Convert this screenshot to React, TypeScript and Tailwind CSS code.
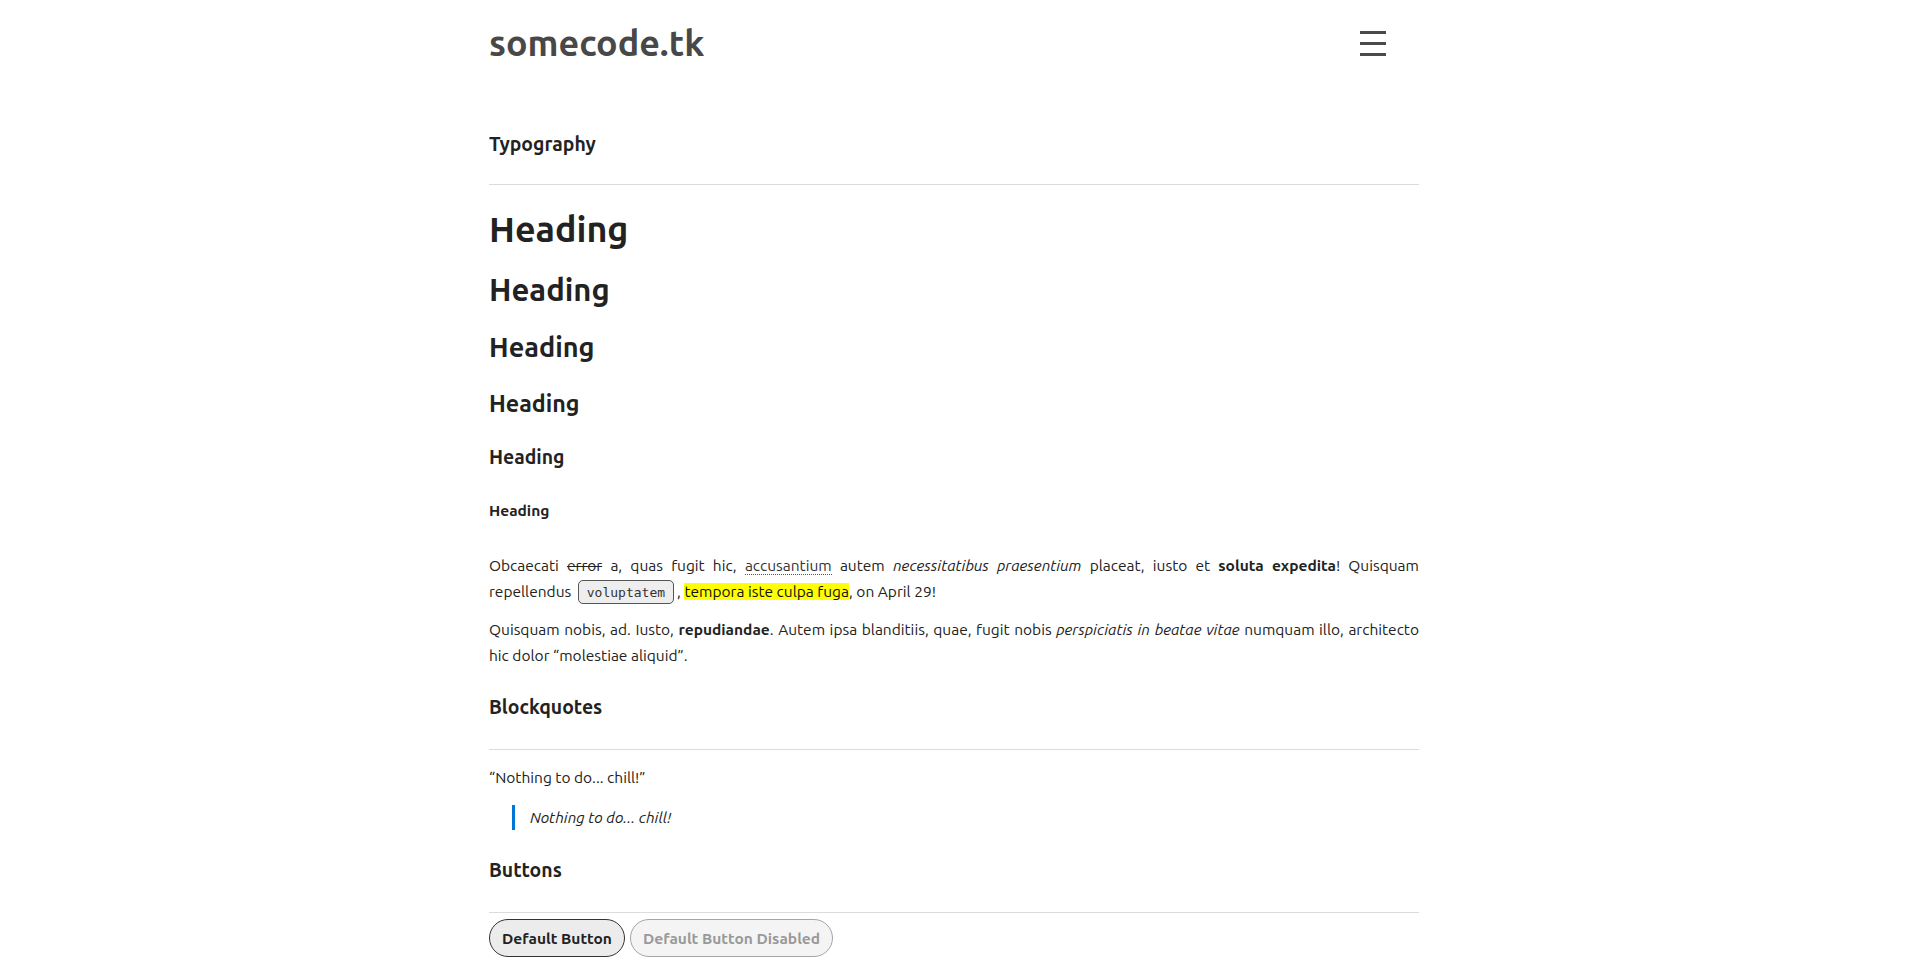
import React from "react";

function SectionTitle({ children, cls }: { children: React.ReactNode; cls: string }) {
  return (
    <h2 className={`${cls} border-b border-[#dcdcdc] text-[19.4px] font-bold leading-[23px] text-[#222]`}>
      {children}
    </h2>
  );
}

export default function App() {
  return (
    <div className="min-h-screen bg-white font-['Ubuntu','Noto_Sans',sans-serif] text-[15.5px] text-[#222]">
      <div className="mx-auto w-[930px]">
        <header className="flex items-center justify-between pt-[26px]">
          <div className="text-[35.9px] font-bold leading-none text-[#484848]">somecode.tk</div>
          <svg width="26" height="26" viewBox="0 0 26 26" className="mr-[33px]" aria-label="menu">
            <rect x="0" y="0" width="26" height="3" fill="#4a4a4a" />
            <rect x="0" y="11" width="26" height="3" fill="#4a4a4a" />
            <rect x="0" y="22" width="26" height="3" fill="#4a4a4a" />
          </svg>
        </header>

        <main>
          <SectionTitle cls="mt-[71px] pb-[28px]">Typography</SectionTitle>

          <h1 className="mt-[23px] text-[35.8px] font-bold leading-[1.2]">Heading</h1>
          <h2 className="mt-[20px] text-[31px] font-bold leading-[1.2]">Heading</h2>
          <h3 className="mt-[23px] text-[27.1px] font-bold leading-[1.2]">Heading</h3>
          <h4 className="mt-[26px] text-[23.25px] font-bold leading-[1.2]">Heading</h4>
          <h5 className="mt-[29px] text-[19.4px] font-bold leading-[1.2]">Heading</h5>
          <h6 className="mt-[32px] text-[15.5px] font-bold leading-[1.2]">Heading</h6>

          <p className="mt-[33px] text-justify leading-[25.5px]">
            Obcaecati <del>error</del> a, quas fugit hic,{" "}
            <a href="#" className="border-b border-dotted border-[#555] text-[#333]">accusantium</a> autem{" "}
            <i>necessitatibus praesentium</i> placeat, iusto et <b>soluta expedita</b>! Quisquam repellendus{" "}
            <code className="mx-[3px] rounded-[5px] border border-[#555] bg-[#eee] px-[8px] py-[3.5px] font-['DejaVu_Sans_Mono',monospace] text-[13px] text-[#333]">
              voluptatem
            </code>
            , <mark className="bg-[#ffff00] text-[#111]">tempora iste culpa fuga</mark>, on April 29!
          </p>
          <p className="mt-[12px] text-justify leading-[25.5px]">
            Quisquam nobis, ad. Iusto, <b>repudiandae</b>. Autem ipsa blanditiis, quae, fugit nobis{" "}
            <i>perspiciatis in beatae vitae</i> numquam illo, architecto hic dolor “molestiae aliquid”.
          </p>

          <SectionTitle cls="mt-[28px] pb-[30px]">Blockquotes</SectionTitle>
          <p className="mt-[15px] leading-[25.5px]">“Nothing to do... chill!”</p>
          <blockquote className="ml-[23px] mt-[14px] border-l-[3px] border-[#0076d6] pl-[15px] italic leading-[25.5px]">
            Nothing to do... chill!
          </blockquote>

          <SectionTitle cls="mt-[29px] pb-[30px]">Buttons</SectionTitle>
          <div className="mt-[6px] flex gap-[5px] pb-10">
            <button className="flex h-[38px] items-center rounded-full border border-[#333] bg-[#ececec] px-[12px] text-[15.5px] font-bold text-[#222]">
              Default Button
            </button>
            <button
              disabled
              className="flex h-[38px] items-center rounded-full border border-[#a5a5a5] bg-[#f4f4f4] px-[12px] text-[15.5px] font-bold text-[#999]"
            >
              Default Button Disabled
            </button>
          </div>
        </main>
      </div>
    </div>
  );
}
